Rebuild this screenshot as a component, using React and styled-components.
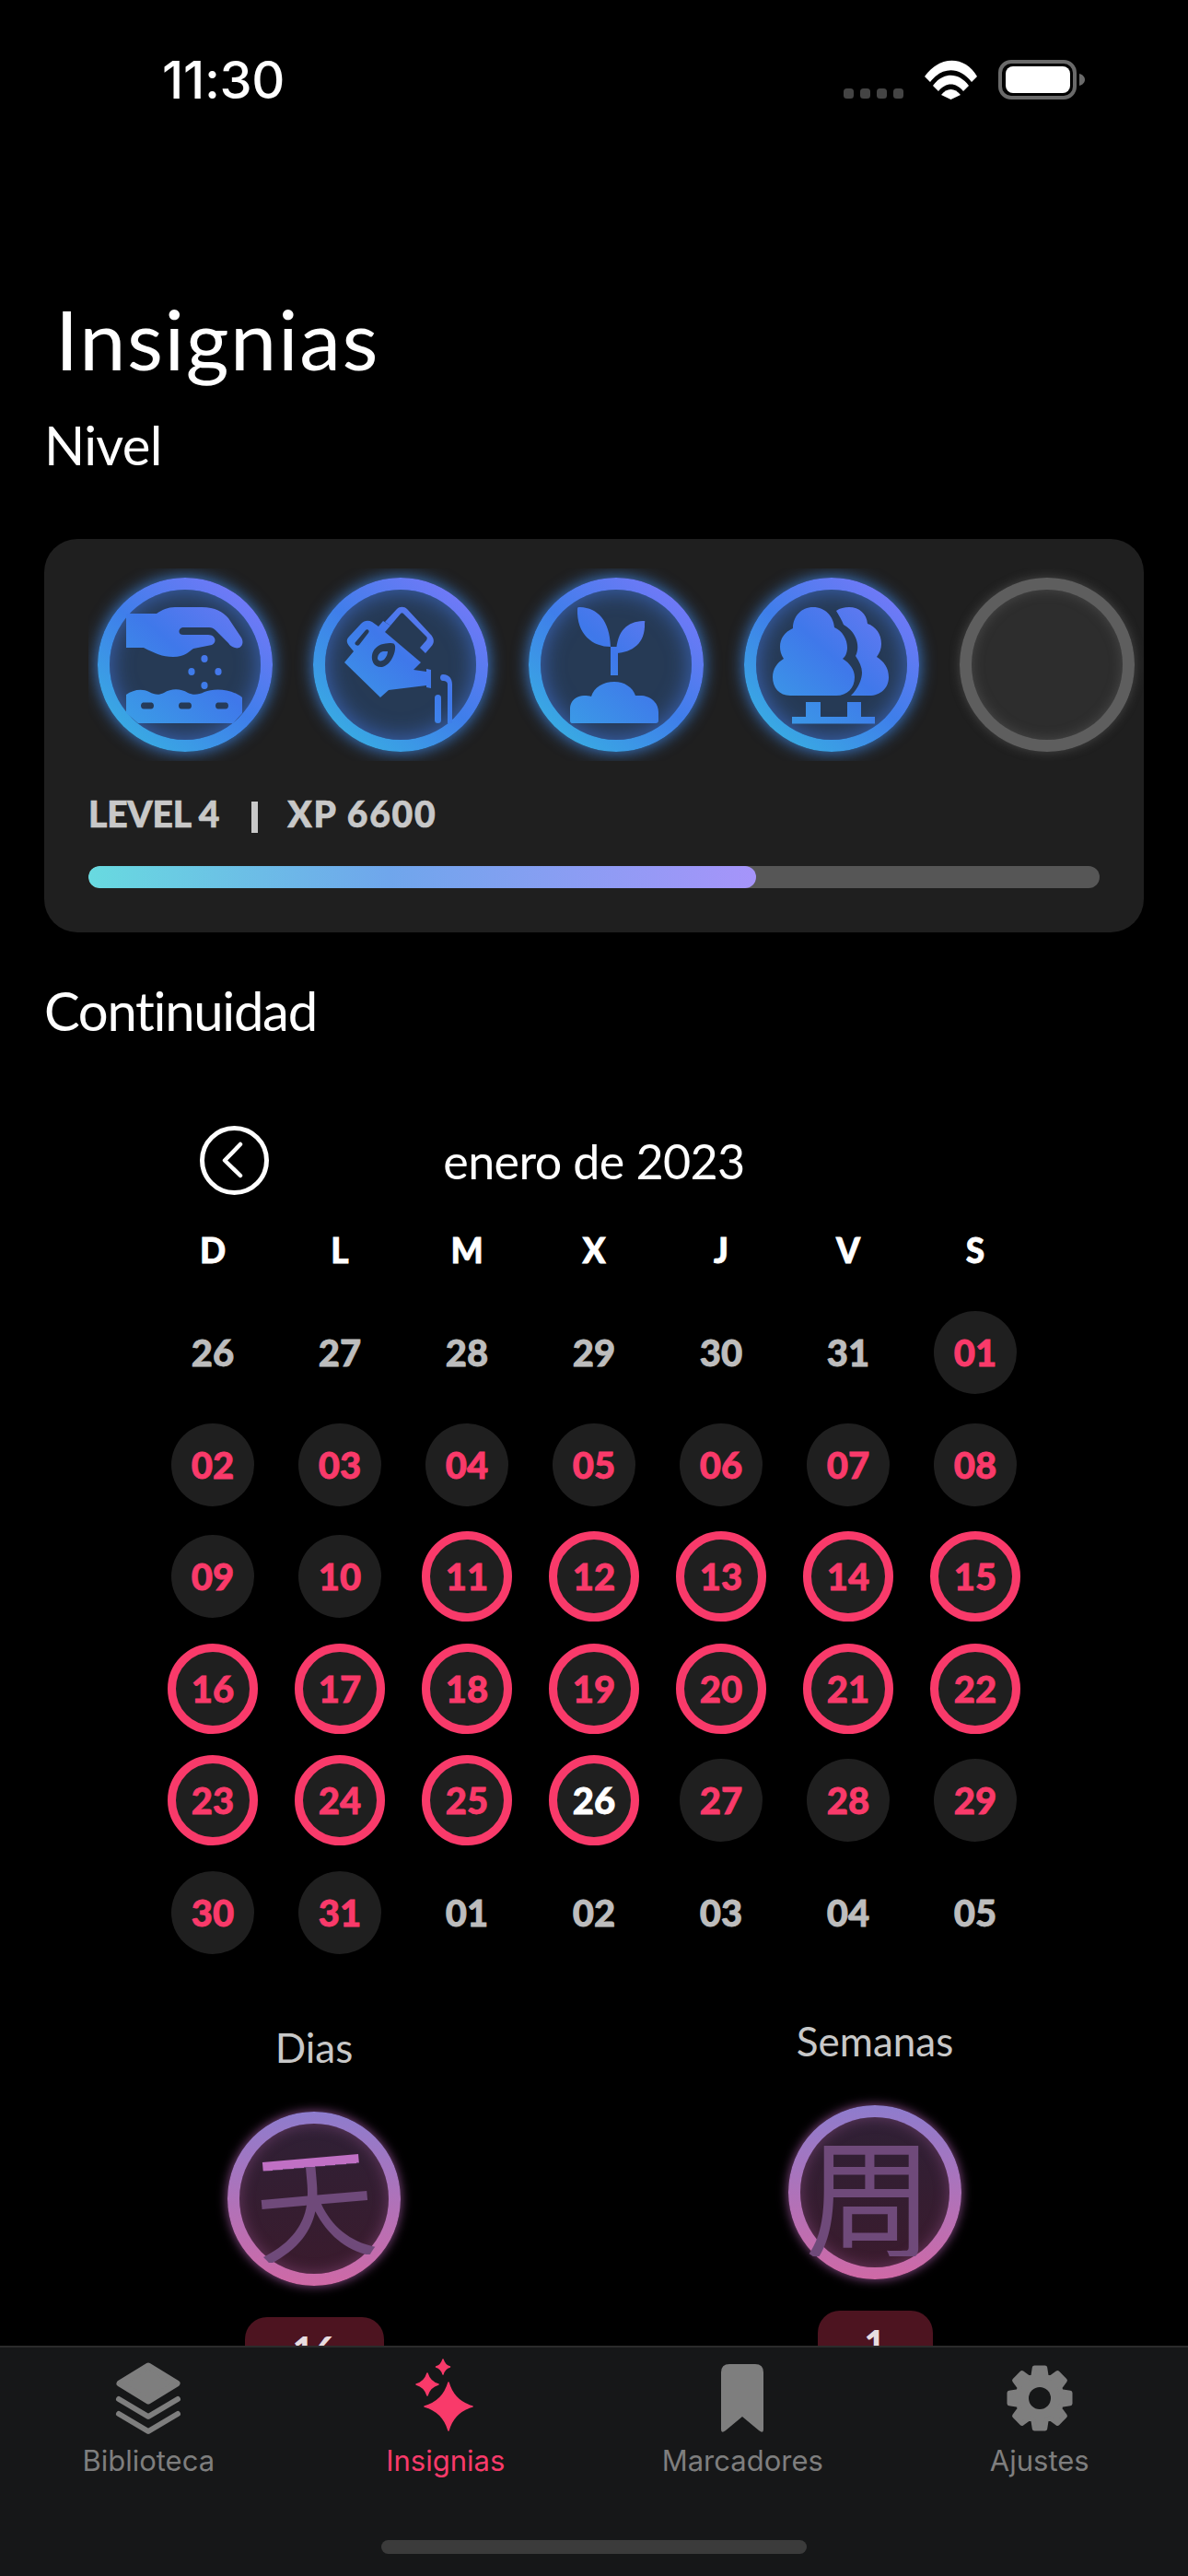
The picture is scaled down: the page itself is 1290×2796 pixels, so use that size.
import React from "react";
import styled, { createGlobalStyle } from "styled-components";

const FUT = `"Lato", "Noto Sans", sans-serif`;
const SYS = `"Inter", "Liberation Sans", sans-serif`;
const PINK = "#f93a6a";

const Global = createGlobalStyle`
  html, body { margin: 0; padding: 0; background: #000; }
  * { box-sizing: border-box; }
`;

const Page = styled.div`
  position: relative;
  width: 1290px;
  height: 2796px;
  overflow: hidden;
  background: #000;
  color: #fff;
  font-family: ${FUT};
`;

const StatusBar = styled.div`
  display: flex;
  align-items: center;
  height: 108px;
  padding: 65px 112px 0 176px;
`;
const Time = styled.div`
  padding-top: 2px;
  font-family: ${SYS};
  font-weight: 500;
  font-size: 56px;
  line-height: 43px;
  letter-spacing: -0.3px;
  flex: 1;
`;
const StatusIcons = styled.svg`
  display: block;
  width: 262px;
  height: 43px;
  flex: none;
`;

const Title = styled.h1`
  margin: 209px 0 0;
  padding-left: 60px;
  font-size: 90px;
  line-height: 100px;
  font-weight: 400;
  letter-spacing: 1.6px;
`;
const SectionTitle = styled.h2`
  margin: ${(p) => p.$top}px 0 0;
  padding-left: 48px;
  font-size: 58px;
  line-height: 60px;
  font-weight: 400;
  letter-spacing: ${(p) => p.$track}px;
`;

const Card = styled.section`
  width: 1194px;
  margin: 72px 0 0 48px;
  padding: 32px 0 48px 48px;
  background: #1f1f1f;
  border-radius: 36px;
`;
const BadgeRow = styled.div`
  display: flex;
  gap: 44px;
  padding: 10px 10px;
  overflow: hidden;
`;
const Badge = styled.div`
  position: relative;
  flex: none;
  width: 190px;
  height: 189px;
  border-radius: 50%;
  border: 13px solid transparent;
  background: linear-gradient(#263a55, #263a55) padding-box,
    linear-gradient(40deg, #38b0e2 8%, #3f7eea 50%, #7279f7 88%) border-box;
  box-shadow: 0 0 18px rgba(64, 140, 240, 0.9), inset 0 0 24px rgba(70, 125, 240, 0.65);
`;
const EmptyBadge = styled(Badge)`
  background: linear-gradient(#2d2d2d, #2d2d2d) padding-box, linear-gradient(#5e5e5e, #5e5e5e) border-box;
  box-shadow: 0 0 12px rgba(130, 130, 130, 0.4), inset 0 0 14px rgba(130, 130, 130, 0.35);
`;
const BadgeArt = styled.svg`
  position: absolute;
  left: -13px;
  top: -13px;
  width: 190px;
  height: 189px;
`;
const LevelText = styled.div`
  display: flex;
  align-items: center;
  margin-top: 35px;
  font-size: 39px;
  line-height: 44px;
  font-weight: 900;
  color: #c8c8c8;
  -webkit-text-stroke: 0.7px #c8c8c8;
`;
const LevelPart = styled.span`
  letter-spacing: ${(p) => p.$track}px;
`;
const LevelSep = styled.span`
  width: 7px;
  height: 34px;
  margin: 8px 32px 0 35px;
  background: #c8c8c8;
`;
const Track = styled.div`
  width: 1098px;
  height: 24px;
  margin-top: 35px;
  border-radius: 12px;
  background: #565656;
  overflow: hidden;
`;
const Fill = styled.div`
  height: 100%;
  border-radius: 12px;
  background: linear-gradient(90deg, #68dae0, #6fa6ec 45%, #a694fa);
`;

const Calendar = styled.section`
  width: 966px;
  margin: 95px 0 0 162px;
`;
const CalHeader = styled.div`
  display: grid;
  grid-template-columns: 1fr auto 1fr;
  align-items: center;
  height: 75px;
`;
const BackButton = styled.svg`
  display: block;
  width: 75px;
  height: 75px;
  margin-left: 55px;
`;
const Month = styled.div`
  font-size: 52px;
  line-height: 60px;
  letter-spacing: -0.6px;
`;
const Week = styled.div`
  display: grid;
  grid-template-columns: repeat(7, 138px);
  margin-top: 40px;
  font-size: 37px;
  line-height: 40px;
  font-weight: 900;
  text-align: center;
  -webkit-text-stroke: 0.8px #fff;
`;
const Days = styled.div`
  display: grid;
  grid-template-columns: repeat(7, 138px);
  grid-auto-rows: 98px;
  row-gap: 23.6px;
  margin-top: 42px;
`;
const Cell = styled.div`
  display: flex;
  align-items: center;
  justify-content: center;
`;
const dayColor = (p) => (p.$kind === "muted" ? "#bdbdbd" : p.$kind === "today" ? "#fff" : PINK);
const Day = styled.div`
  display: flex;
  align-items: center;
  justify-content: center;
  width: ${(p) => (p.$kind === "ring" || p.$kind === "today" ? 98 : 90)}px;
  height: ${(p) => (p.$kind === "ring" || p.$kind === "today" ? 98 : 90)}px;
  border-radius: 50%;
  font-size: 40px;
  font-weight: 900;
  color: ${dayColor};
  -webkit-text-stroke: 0.8px ${dayColor};
  background: ${(p) => (p.$kind === "muted" ? "transparent" : "#1f1f1f")};
  border: ${(p) => (p.$kind === "ring" || p.$kind === "today" ? `9px solid ${PINK}` : "none")};
`;

const Stats = styled.section`
  display: flex;
  align-items: flex-start;
  gap: 309px;
  margin-top: 65px;
  padding-left: 191px;
`;
const Stat = styled.div`
  display: flex;
  flex-direction: column;
  align-items: center;
  width: 300px;
  padding-top: ${(p) => p.$drop}px;
`;
const StatLabel = styled.div`
  font-size: 44px;
  line-height: 50px;
  color: #c8c8c8;
`;
const Medal = styled.div`
  position: relative;
  display: flex;
  align-items: center;
  justify-content: center;
  width: 188px;
  height: 189px;
  margin-top: 45px;
  border-radius: 50%;
  border: 13px solid transparent;
  background: linear-gradient(#2f2035, #3a1b2d) padding-box,
    linear-gradient(180deg, #8e7ccd, #cf69a6) border-box;
  box-shadow: 0 0 12px rgba(200, 110, 200, 0.7), inset 0 0 16px rgba(200, 110, 190, 0.35);
`;
const Kanji = styled.span`
  font-family: "Noto Sans CJK TC", "Noto Sans CJK SC", sans-serif;
  font-weight: 400;
  font-size: ${(p) => p.$size}px;
  line-height: 1;
  color: transparent;
  background: ${(p) => p.$paint};
  -webkit-background-clip: text;
  background-clip: text;
  transform: ${(p) => p.$tilt};
`;
const Pill = styled.div`
  width: ${(p) => p.$w}px;
  height: 70px;
  margin-top: 34px;
  border-radius: 24px;
  background: #4d1420;
  color: #e8dde0;
  font-size: 40px;
  line-height: 70px;
  font-weight: 900;
  text-align: center;
`;

const TabBar = styled.nav`
  position: absolute;
  left: 0;
  right: 0;
  bottom: 0;
  height: 250px;
  display: grid;
  grid-template-columns: repeat(4, 1fr);
  padding-top: 12px;
  background: #161718;
  border-top: 2px solid #2b2b2b;
`;
const Tab = styled.div`
  display: flex;
  flex-direction: column;
  align-items: center;
  color: ${(p) => (p.$active ? PINK : "#7e7e7e")};
`;
const TabIcon = styled.svg`
  display: block;
  width: 80px;
  height: 84px;
`;
const TabLabel = styled.div`
  margin-top: 10px;
  font-family: ${SYS};
  font-size: 31px;
  line-height: 34px;
  font-weight: 400;
`;
const HomeIndicator = styled.div`
  position: absolute;
  left: 414px;
  bottom: 24px;
  width: 462px;
  height: 15px;
  border-radius: 8px;
  background: #3b3b3b;
`;

const GradientDef = () => (
  <defs>
    <linearGradient id="blue" gradientUnits="userSpaceOnUse" x1="30" y1="165" x2="155" y2="25">
      <stop offset="0" stopColor="#3a9fe6" />
      <stop offset="0.55" stopColor="#3f78ea" />
      <stop offset="1" stopColor="#6a79f3" />
    </linearGradient>
  </defs>
);

const HandIcon = () => (
  <BadgeArt viewBox="0 0 190 189">
    <GradientDef />
    <g fill="url(#blue)">
      <path d="M31 39H64C70 35 76 32 84 32H113C128 32 136 37 142 44L156 65C160 72 155 78 149 76C146 75 144 74 142 71L128 57C126 55 124 54 121 54H93C88 54 86 62 93 62H120C128 62 130 70 124 73L104 77C99 80 95 86 82 86C70 86 62 82 50 76H31Z" />
      <ellipse cx="116" cy="88" rx="3.6" ry="4" />
      <ellipse cx="102" cy="102" rx="3.6" ry="4" />
      <ellipse cx="131" cy="102" rx="3.6" ry="4" />
      <ellipse cx="116" cy="117" rx="3.6" ry="4" />
      <path fillRule="evenodd" d="M31 127C38 122 48 120 56 124C62 127 66 128 72 125C80 120 90 120 98 125C104 128 110 127 116 124C126 120 144 120 157 130V147L147 158H44L31 147ZM50 135.500H58C62 135.500 62 142.500 58 142.500H50C46 142.500 46 135.500 50 135.500ZM91 135.500H99C103 135.500 103 142.500 99 142.500H91C87 142.500 87 135.500 91 135.500ZM131 135.500H139C143 135.500 143 142.500 139 142.500H131C127 142.500 127 135.500 131 135.500Z" />
    </g>
  </BadgeArt>
);

const CanIcon = () => (
  <BadgeArt viewBox="0 0 190 189">
    <GradientDef />
    <g fill="url(#blue)">
      <path fillRule="evenodd" d="M34 92L44 80L39 74C36 70 36 67 39 64L52 50C56 46 60 46 64 48L71 53L76 47L84 52L78 59L117 92L109 100L123 102V99L128 100V120L123 119V117L82 122L73 130ZM46 70L57 57C59 55 62 58 60 60L50 73C48 75 44 72 46 70ZM76 72C84 71 88 70 89 74C90 82 84 95 75 97C66 98 63 90 64 84C65 78 70 73 76 72ZM76 80C72 81 70 84 70 88C71 91 74 91 77 89C80 86 81 82 81 80Z" />
      <path d="M78 48L91 34C94 31 99 31 102 34L127 61C132 66 132 71 128 75L122 82L116 76L123 68C124 66 124 65 123 64L98 39C97 38 96 38 95 39L84 52Z" />
      <rect x="132" y="127" width="7" height="31" rx="3.500" />
      <path d="M141 105C148 105 151 110 151 116V158H146V116C146 113 144 112 141 112C137 112 137 105 141 105Z" />
    </g>
  </BadgeArt>
);

const SproutIcon = () => (
  <BadgeArt viewBox="0 0 190 189">
    <GradientDef />
    <g fill="url(#blue)">
      <path d="M53 34C53 32 54 32 56 32C75 33 88 46 89 75C70 75 52 62 53 34Z" />
      <path d="M126 49C127 47 126 47 124 47C108 48 96 56 95 82C112 81 127 72 126 49Z" />
      <rect x="89" y="75" width="8" height="31" />
      <path d="M48 158C45 158 45 156 45 154V142C45 134 52 128 60 128C63 128 66 128 68 129C71 119 81 113 93 113C104 113 113 119 116 128C118 128 120 128 123 128C133 129 141 136 141 146V155C141 157 140 158 138 158Z" />
    </g>
  </BadgeArt>
);

const TreesIcon = () => (
  <BadgeArt viewBox="0 0 190 189">
    <GradientDef />
    <path fill="url(#blue)" d="M100 36C104 33 109 32 114 32C125 32 133 39 134 50C143 53 149 61 149 72C149 77 147 82 144 86C152 91 157 98 157 108C157 120 148 128 136 128H116C124 120 128 110 128 103C128 97 125 91 121 85C124 79 124 72 121 65C118 58 113 54 108 51C106 46 103 41 100 36Z" />
    <g fill="url(#blue)">
      <path d="M75 32C88 32 97 42 98 54C107 58 112 67 112 76C112 81 110 86 107 88C115 93 120 100 120 108C120 120 112 128 100 128H50C38 128 31 119 31 108C31 99 36 92 43 88C40 84 39 79 39 75C39 66 44 59 53 55C53 42 62 32 75 32Z" />
      <rect x="67" y="135" width="16" height="18" />
      <rect x="112" y="135" width="15" height="18" />
      <rect x="52" y="151" width="90" height="7.500" />
    </g>
  </BadgeArt>
);

const WEEK = ["D", "L", "M", "X", "J", "V", "S"];
const DAYS = [
  ["26", "muted"], ["27", "muted"], ["28", "muted"], ["29", "muted"], ["30", "muted"], ["31", "muted"], ["01", "done"],
  ["02", "done"], ["03", "done"], ["04", "done"], ["05", "done"], ["06", "done"], ["07", "done"], ["08", "done"],
  ["09", "done"], ["10", "done"], ["11", "ring"], ["12", "ring"], ["13", "ring"], ["14", "ring"], ["15", "ring"],
  ["16", "ring"], ["17", "ring"], ["18", "ring"], ["19", "ring"], ["20", "ring"], ["21", "ring"], ["22", "ring"],
  ["23", "ring"], ["24", "ring"], ["25", "ring"], ["26", "today"], ["27", "done"], ["28", "done"], ["29", "done"],
  ["30", "done"], ["31", "done"], ["01", "muted"], ["02", "muted"], ["03", "muted"], ["04", "muted"], ["05", "muted"],
];

const star = (cx, cy, rx, ry) => {
  const kx = rx * 0.22;
  const ky = ry * 0.22;
  return `M${cx} ${cy - ry}Q${cx + kx} ${cy - ky} ${cx + rx} ${cy}Q${cx + kx} ${cy + ky} ${cx} ${cy + ry}Q${cx - kx} ${cy + ky} ${cx - rx} ${cy}Q${cx - kx} ${cy - ky} ${cx} ${cy - ry}Z`;
};

const gearPath = (() => {
  const cx = 40;
  const cy = 43;
  const pts = [];
  for (let i = 0; i < 8; i++) {
    const a = (i * Math.PI) / 4 - Math.PI / 2;
    const spots = [
      [-0.3, 24.5],
      [-0.17, 33.5],
      [0.17, 33.5],
      [0.3, 24.5],
    ];
    spots.forEach(([d, r]) => {
      pts.push(`${(cx + r * Math.cos(a + d)).toFixed(1)} ${(cy + r * Math.sin(a + d)).toFixed(1)}`);
    });
  }
  return `M${pts.join("L")}Z`;
})();

export default function App() {
  return (
    <Page>
      <Global />
      <StatusBar>
        <Time>11:30</Time>
        <StatusIcons viewBox="0 0 262 43">
          <g fill="#444">
            <rect x="0" y="31" width="11" height="11" rx="3.500" />
            <rect x="18" y="31" width="11" height="11" rx="3.500" />
            <rect x="36" y="31" width="11" height="11" rx="3.500" />
            <rect x="54" y="31" width="11" height="11" rx="3.500" />
          </g>
          <g fill="#fff">
            <path d="M88 18C104 -5 132 -5 145 18L139 24C126 7 107 7 94 24Z" />
            <path d="M97 28C108 13 125 13 136 28L130 34C122 24 111 24 103 34Z" />
            <path d="M106 38C112 30 121 30 127 38L116.500 43Z" />
          </g>
          <rect x="170" y="2" width="81" height="39" rx="12" fill="none" stroke="#6a6a6a" strokeWidth="4" />
          <rect x="176" y="7" width="70" height="29" rx="8" fill="#fff" />
          <path d="M256 15C260 16 262 19 262 21.500C262 24 260 27 256 28Z" fill="#6a6a6a" />
        </StatusIcons>
      </StatusBar>

      <Title>Insignias</Title>
      <SectionTitle $top={36} $track={-0.7}>Nivel</SectionTitle>

      <Card>
        <BadgeRow>
          <Badge><HandIcon /></Badge>
          <Badge><CanIcon /></Badge>
          <Badge><SproutIcon /></Badge>
          <Badge><TreesIcon /></Badge>
          <EmptyBadge />
        </BadgeRow>
        <LevelText>
          <LevelPart $track={-0.2}>LEVEL 4</LevelPart>
          <LevelSep />
          <LevelPart $track={1.8}>XP 6600</LevelPart>
        </LevelText>
        <Track>
          <Fill style={{ width: `${(6600 / 10000) * 100}%` }} />
        </Track>
      </Card>

      <SectionTitle $top={55} $track={-1.3}>Continuidad</SectionTitle>

      <Calendar>
        <CalHeader>
          <BackButton viewBox="0 0 75 75">
            <circle cx="37.500" cy="37.500" r="35" fill="none" stroke="#fff" strokeWidth="5" />
            <path d="M44 20L27 37.500L44 54" fill="none" stroke="#fff" strokeWidth="4.500" strokeLinecap="round" strokeLinejoin="round" />
          </BackButton>
          <Month>enero de 2023</Month>
          <span />
        </CalHeader>
        <Week>
          {WEEK.map((d) => (
            <div key={d}>{d}</div>
          ))}
        </Week>
        <Days>
          {DAYS.map(([n, kind], i) => (
            <Cell key={i}>
              <Day $kind={kind}>{n}</Day>
            </Cell>
          ))}
        </Days>
      </Calendar>

      <Stats>
        <Stat $drop={7}>
          <StatLabel>Dias</StatLabel>
          <Medal>
            <Kanji $size={132} $tilt="rotate(-5deg)" $paint="linear-gradient(180deg, #c070c4 0 24%, #6f4a7a 24%, #6f4a7a 100%)">天</Kanji>
          </Medal>
          <Pill $w={151}>16</Pill>
        </Stat>
        <Stat $drop={0}>
          <StatLabel>Semanas</StatLabel>
          <Medal>
            <Kanji $size={140} $tilt="translateX(-6px)" $paint="linear-gradient(100deg, #b868bc 0 13%, #6f4a7a 13%, #6f4a7a 100%)">周</Kanji>
          </Medal>
          <Pill $w={125}>1</Pill>
        </Stat>
      </Stats>

      <TabBar>
        <Tab>
          <TabIcon viewBox="0 0 80 84">
            <path d="M40 8L71 27L40 46L9 27Z" fill="currentColor" stroke="currentColor" strokeWidth="7" strokeLinejoin="round" />
            <path d="M8 44L40 63L72 44M8 60L40 79L72 60" fill="none" stroke="currentColor" strokeWidth="6" strokeLinecap="round" strokeLinejoin="round" />
          </TabIcon>
          <TabLabel>Biblioteca</TabLabel>
        </Tab>
        <Tab $active>
          <TabIcon viewBox="0 0 80 84">
            <g fill="currentColor" stroke="currentColor" strokeWidth="1.500" strokeLinejoin="round">
              <path d={star(43, 52, 26, 26)} />
              <path d={star(20, 28, 12, 12)} />
              <path d={star(37, 9, 7.5, 8)} />
            </g>
          </TabIcon>
          <TabLabel>Insignias</TabLabel>
        </Tab>
        <Tab>
          <TabIcon viewBox="0 0 80 84">
            <path d="M17 15Q17 6 26 6H54Q63 6 63 15V77Q63 82 58 78L40 63L22 78Q17 82 17 77Z" fill="currentColor" />
          </TabIcon>
          <TabLabel>Marcadores</TabLabel>
        </Tab>
        <Tab>
          <TabIcon viewBox="0 0 80 84">
            <path d={gearPath} fill="currentColor" stroke="currentColor" strokeWidth="5" strokeLinejoin="round" />
            <circle cx="40" cy="43" r="12" fill="#161718" />
          </TabIcon>
          <TabLabel>Ajustes</TabLabel>
        </Tab>
        <HomeIndicator />
      </TabBar>
    </Page>
  );
}
